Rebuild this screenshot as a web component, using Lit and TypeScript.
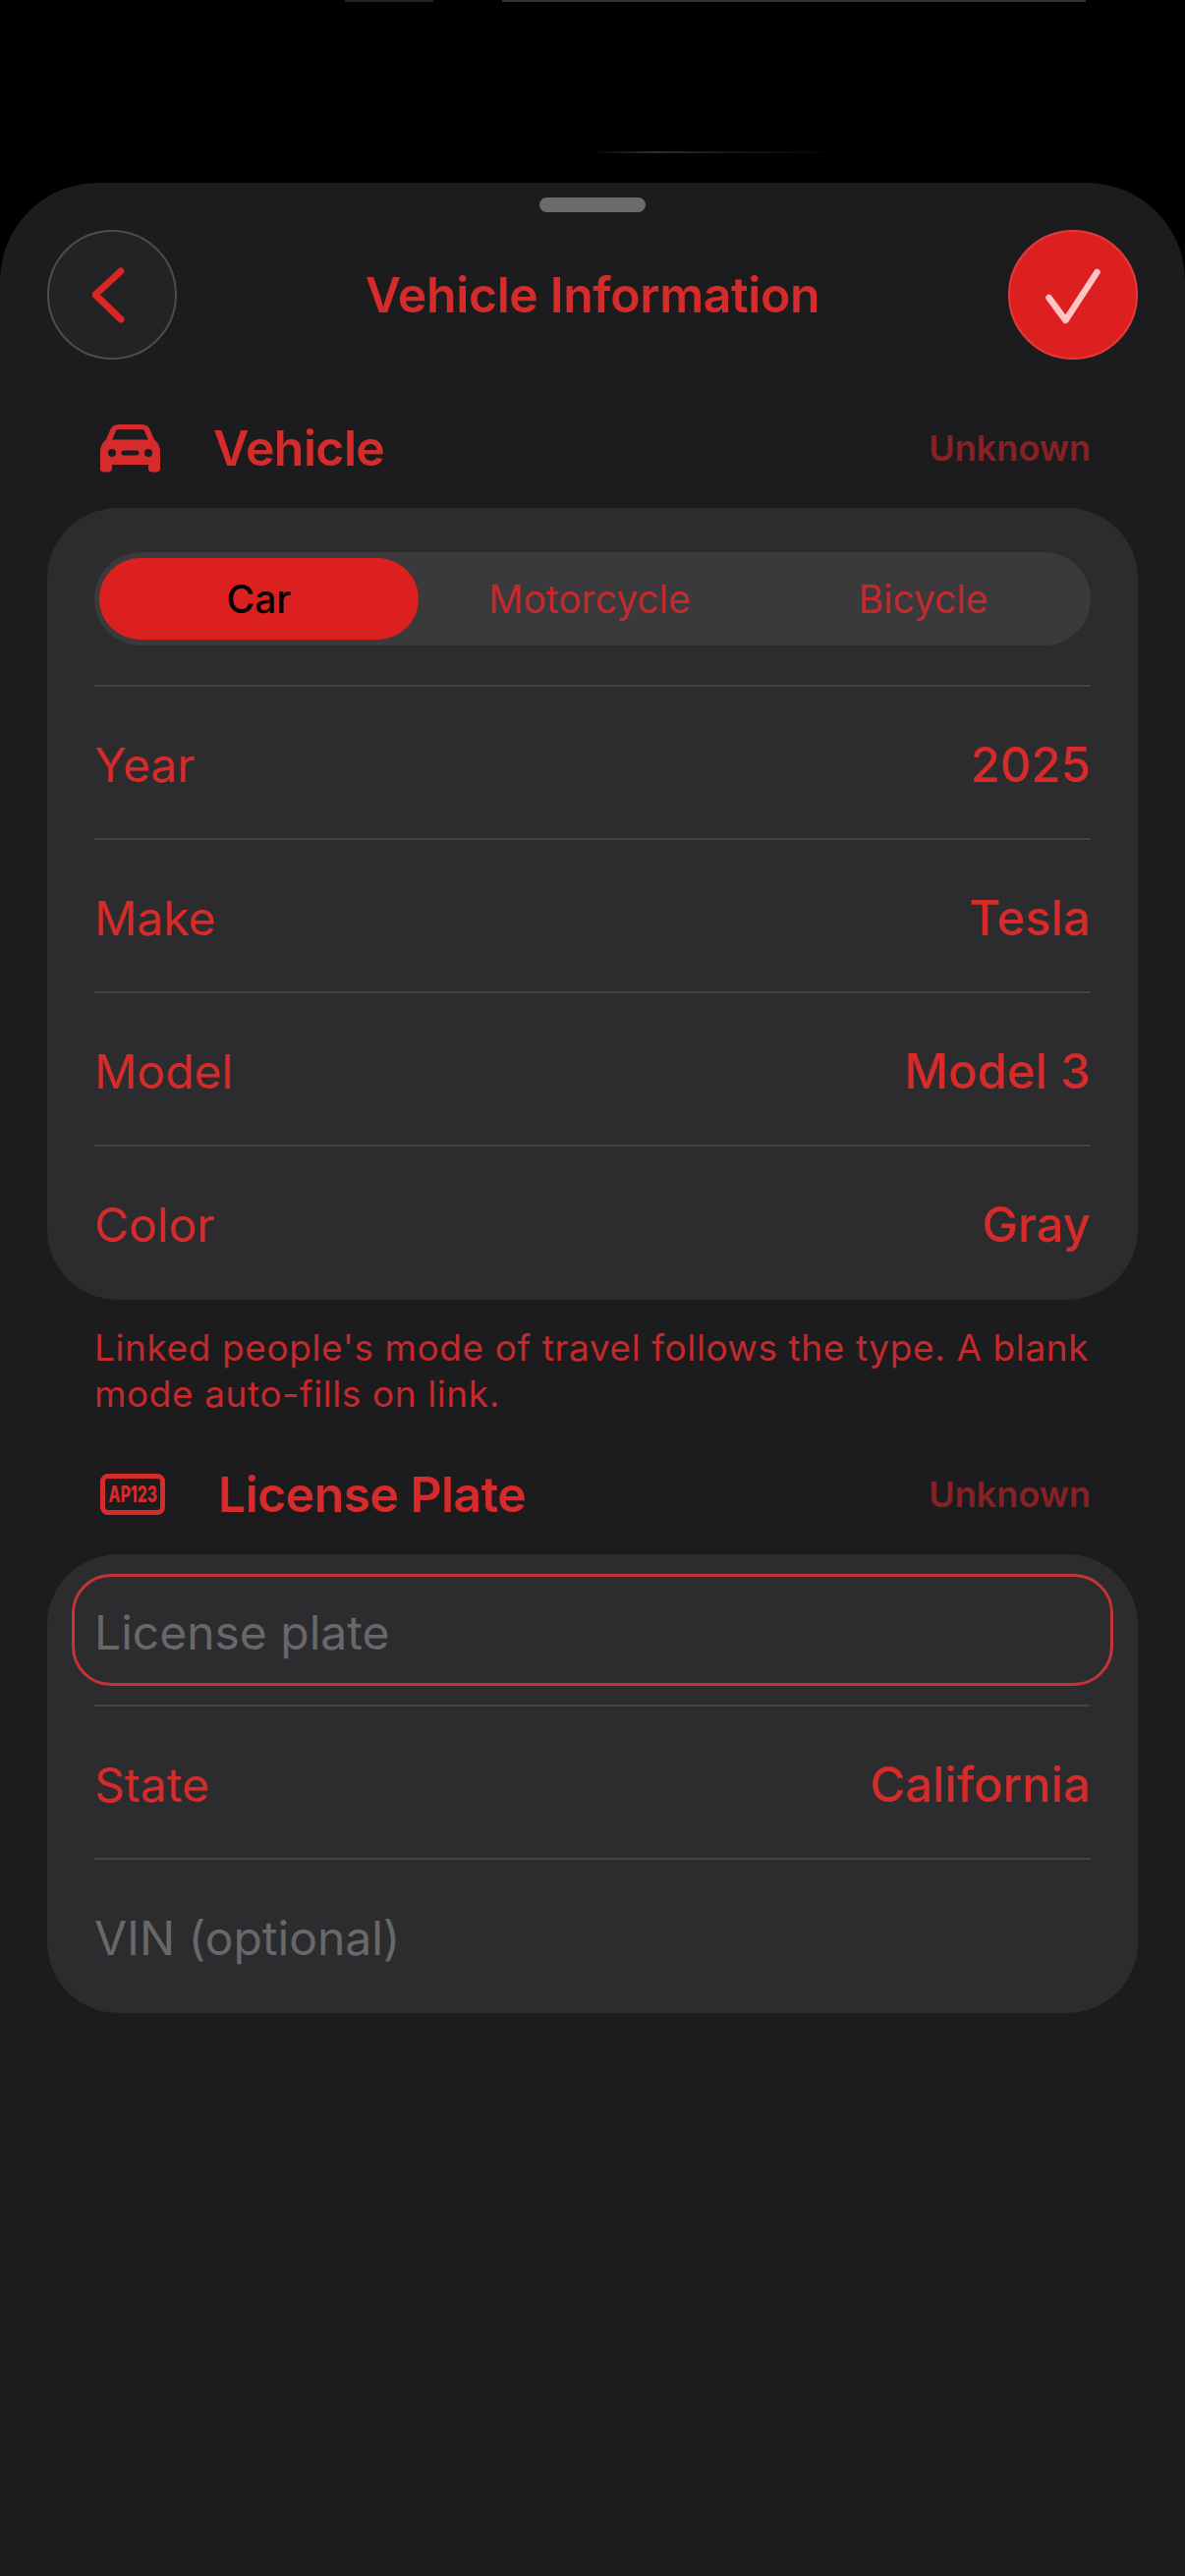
import { LitElement, html, css, svg } from 'lit';
import { customElement } from 'lit/decorators.js';

const carIcon = svg`
  <path fill="currentColor" fill-rule="evenodd" d="M19 0h23c4.500 0 7.500 2 9 6l4 9.500c4 3 6 7 6 12V45c0 2-1.500 3.500-3.500 3.500H53c-2.200 0-4-1.500-4-3.500v-4H12v4c0 2-1.800 3.500-4 3.500H3.500C1.500 48.500 0 47 0 45V27.500c0-5 2-9 6-12L10 6c1.500-4 4.500-6 9-6ZM18.500 5c-1.300 0-2.200.7-2.700 1.900L12.300 15.500h36.400L45.200 6.900C44.700 5.700 43.800 5 42.500 5ZM12 25a4 4 0 1 0 0 8 4 4 0 0 0 0-8Zm37 0a4 4 0 1 0 0 8 4 4 0 0 0 0-8ZM24 26.500a2.500 2.500 0 0 0 0 5h13a2.500 2.500 0 0 0 0-5Z"/>
`;

@customElement('app-root')
export class AppRoot extends LitElement {
  static styles = css`
    :host {
      display: block;
      width: 1206px;
      height: 2622px;
      background: #000;
      font-family: Inter, 'Liberation Sans', sans-serif;
      color: #d62b2b;
      overflow: hidden;
      position: relative;
    }
    .status-line {
      position: absolute;
      top: 0;
      left: 351px;
      width: 754px;
      height: 2px;
      background: linear-gradient(90deg, #222 0, #222 90px, #000 90px, #000 160px, #333 160px);
    }
    .glint {
      position: absolute;
      top: 154px;
      left: 600px;
      width: 260px;
      height: 2px;
      background: linear-gradient(90deg, #000, #2e2e2e 25%, #161616 55%, #000);
    }
    .sheet {
      box-sizing: border-box;
      margin-top: 186px;
      height: 2436px;
      background: #1c1c1e;
      border-radius: 100px 100px 0 0;
      padding: 15px 48px 0;
      display: flex;
      flex-direction: column;
    }
    .grabber {
      align-self: center;
      width: 108px;
      height: 15px;
      border-radius: 8px;
      background: #6b6b6d;
    }
    .nav {
      display: flex;
      align-items: center;
      justify-content: space-between;
      margin: 18px 0 0;
      height: 132px;
    }
    .round {
      box-sizing: border-box;
      width: 132px;
      height: 132px;
      border-radius: 50%;
      display: flex;
      align-items: center;
      justify-content: center;
    }
    .back {
      background: #232325;
      border: 2px solid #4d4d4f;
    }
    .done {
      background: #dc2020;
      border: 2px solid #e63a3a;
    }
    .title {
      font-size: 50px;
      font-weight: 600;
      letter-spacing: -0.4px;
    }
    .section-head {
      display: flex;
      align-items: center;
      height: 70px;
      padding: 0 48px 0 54px;
    }
    .section-head.first {
      margin-top: 55px;
    }
    .section-head.second {
      margin-top: 44px;
    }
    .section-name {
      font-size: 50px;
      font-weight: 600;
      letter-spacing: -0.6px;
      flex: 1;
    }
    .section-icon {
      display: block;
      flex: none;
      margin-right: 54px;
    }
    .plate-icon {
      box-sizing: border-box;
      width: 66px;
      height: 42px;
      border: 5px solid currentColor;
      border-radius: 8px;
      display: flex;
      align-items: center;
      justify-content: center;
    }
    .plate-icon span {
      font-size: 23px;
      line-height: 24px;
      font-weight: 800;
      white-space: nowrap;
      transform: scaleX(0.68);
    }
    .status {
      font-size: 36px;
      font-weight: 600;
      color: #862225;
    }
    .card {
      background: #2c2c2e;
      border-radius: 72px;
      padding: 0 48px 2px;
    }
    .card.vehicle {
      margin-top: 26px;
      padding-top: 45px;
    }
    .card.plate {
      margin-top: 26px;
      padding-top: 20px;
    }
    .segments {
      box-sizing: border-box;
      display: grid;
      grid-template-columns: 325px 348px 1fr;
      height: 95px;
      padding: 6px 5px;
      border-radius: 48px;
      background: #3a3a3c;
      margin-bottom: 40px;
    }
    .segment {
      display: flex;
      align-items: center;
      justify-content: center;
      font-size: 39px;
      font-weight: 400;
      color: #c42a2c;
      border-radius: 42px;
    }
    .segment.selected {
      background: #dc2020;
      color: #000;
      font-weight: 500;
    }
    .row {
      box-sizing: border-box;
      display: flex;
      align-items: center;
      justify-content: space-between;
      height: 156px;
      padding-top: 4px;
      border-top: 2px solid #434345;
      font-size: 48px;
    }
    .row .value {
      font-size: 49px;
      font-weight: 500;
    }
    .placeholder {
      color: #68686b;
    }
    .input {
      box-sizing: border-box;
      display: flex;
      align-items: center;
      height: 114px;
      margin: 0 -23px 19px;
      padding: 4px 20px 0;
      border: 3px solid #c23437;
      border-radius: 40px;
      font-size: 48px;
    }
    .note {
      margin: 25px 48px 0;
      font-size: 37px;
      line-height: 47px;
      color: #c42a2c;
      letter-spacing: 0.6px;
    }
  `;

  render() {
    return html`
      <div class="status-line"></div>
      <div class="glint"></div>
      <div class="sheet">
        <div class="grabber"></div>
        <div class="nav">
          <div class="round back">
            <svg width="40" height="60" viewBox="0 0 40 60" fill="none">
              <path d="M29 6 3 30l26 25" stroke="#dc2626" stroke-width="7" stroke-linecap="round" stroke-linejoin="round"/>
            </svg>
          </div>
          <div class="title">Vehicle Information</div>
          <div class="round done">
            <svg width="60" height="60" viewBox="0 0 60 60" fill="none">
              <path d="M5.500 33 22.500 56 54.500 7" stroke="#ffc4c4" stroke-width="6.500" stroke-linecap="round" stroke-linejoin="round"/>
            </svg>
          </div>
        </div>

        <div class="section-head first">
          <svg class="section-icon" width="61" height="49" viewBox="0 0 61 49">${carIcon}</svg>
          <div class="section-name">Vehicle</div>
          <div class="status">Unknown</div>
        </div>
        <div class="card vehicle">
          <div class="segments">
            <div class="segment selected">Car</div>
            <div class="segment">Motorcycle</div>
            <div class="segment">Bicycle</div>
          </div>
          <div class="row"><span>Year</span><span class="value">2025</span></div>
          <div class="row"><span>Make</span><span class="value">Tesla</span></div>
          <div class="row"><span>Model</span><span class="value">Model 3</span></div>
          <div class="row"><span>Color</span><span class="value">Gray</span></div>
        </div>
        <div class="note">Linked people's mode of travel follows the type. A blank mode auto-fills on link.</div>

        <div class="section-head second">
          <div class="section-icon plate-icon"><span>AP123</span></div>
          <div class="section-name">License Plate</div>
          <div class="status">Unknown</div>
        </div>
        <div class="card plate">
          <div class="input placeholder">License plate</div>
          <div class="row"><span>State</span><span class="value">California</span></div>
          <div class="row placeholder"><span>VIN (optional)</span></div>
        </div>
      </div>
    `;
  }
}
